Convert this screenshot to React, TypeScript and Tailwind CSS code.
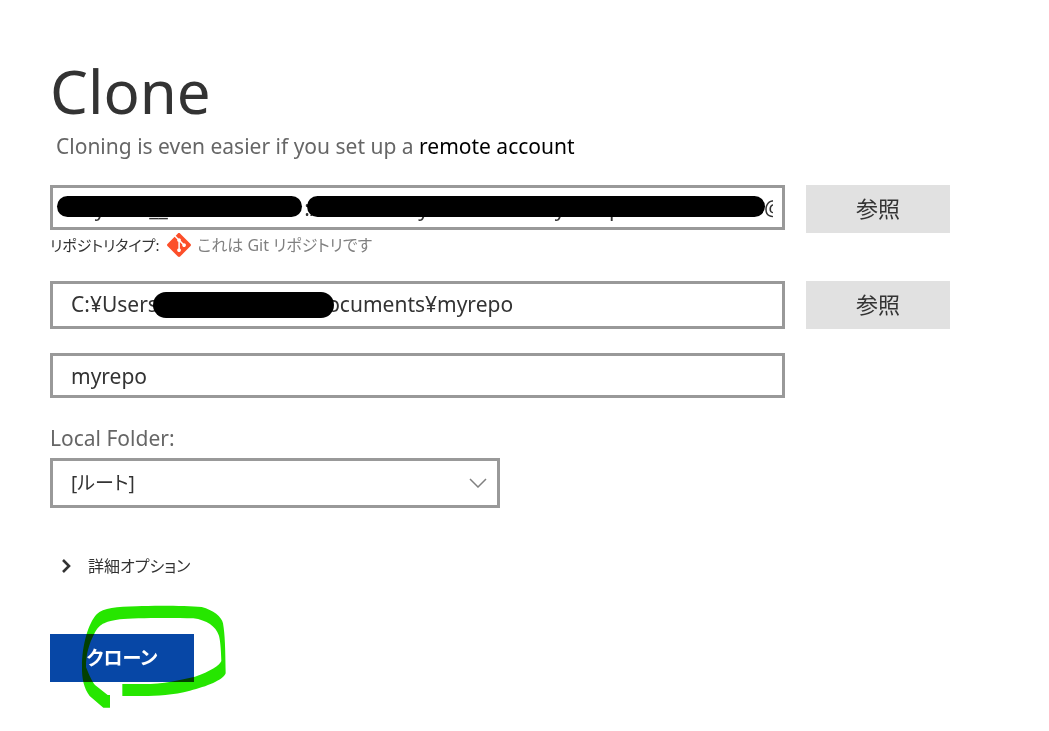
import { useState } from 'react';
import type { InputHTMLAttributes, ReactNode } from 'react';
import { SiGit } from 'react-icons/si';

// Non-breaking runs keep the hidden parts of the address as wide as the real ones
const gap = (n: number) => '\u00a0'.repeat(n);
const REMOTE_URL = `${gap(6)}y${gap(8)}__${gap(25)}://${gap(17)}y${gap(23)}y${gap(8)}p${gap(26)}@`;
const LOCAL_PATH = `C:¥Users${gap(31)}ocuments¥myrepo`;

function TextField({ className = '', ...rest }: InputHTMLAttributes<HTMLInputElement>) {
  return (
    <input
      type="text"
      className={`block w-full border-[3px] border-[#999999] bg-white text-[21px] text-[#333333] outline-none ${className}`}
      {...rest}
    />
  );
}

function BrowseButton({ label }: { label: string }) {
  return (
    <button type="button" aria-label={label} className="h-12 bg-[#e1e1e1] pb-0.5 text-[22px] text-[#333333]">
      参照
    </button>
  );
}

function Redaction({ className }: { className: string }) {
  return <span aria-hidden="true" className={`absolute rounded-full bg-black ${className}`} />;
}

function FormRow({ children, className = '' }: { children: ReactNode; className?: string }) {
  return (
    <div className={`grid grid-cols-[1fr_144px] items-start gap-x-[21px] ${className}`}>{children}</div>
  );
}

function MarkerCircle() {
  return (
    <svg
      aria-hidden="true"
      viewBox="0 0 600 360"
      className="pointer-events-none absolute -left-2.5 -top-[39px] h-[120px] w-[200px] max-w-none mix-blend-multiply"
    >
      <path
        fill="#26e600"
        d="M210 338 L190 338 L149 303 C132 280 125 250 126 215 C126 150 145 85 170 58 C190 38 230 36 290 34 C340 31 440 32 485 36 C520 45 545 65 549 85 C555 120 556 160 557 235 C550 255 500 275 450 287 C400 300 350 303 310 303 L247 303 L247 267 L310 267 C370 267 420 255 465 245 C510 230 540 210 544 198 C543 160 540 130 536 120 C528 95 500 75 460 70 C400 68 280 68 240 73 C190 80 178 90 165 112 C145 150 138 180 138 217 C150 245 155 258 165 270 L203 300 L210 300 Z"
      />
    </svg>
  );
}

export default function App() {
  const [url, setUrl] = useState(REMOTE_URL);
  const [path, setPath] = useState(LOCAL_PATH);
  const [name, setName] = useState('myrepo');

  return (
    <main
      lang="ja"
      className="min-h-screen bg-white pt-[51px] pr-[99px] pb-12 pl-[50px] font-['Noto_Sans','Noto_Sans_CJK_JP',sans-serif] text-[#333333] [font-feature-settings:'palt']"
    >
      <h1 className="text-[60px] leading-20">Clone</h1>
      <p className="mt-px pl-1.5 text-[21px] leading-7 text-[#666666]">
        Cloning is even easier if you set up a{' '}
        <a href="#accounts" className="text-black">
          remote account
        </a>
      </p>

      <form onSubmit={(e) => e.preventDefault()}>
        {/* Remote address */}
        <FormRow className="mt-[25px]">
          <div>
            <div className="relative">
              <TextField
                aria-label="Source Path / URL"
                className="h-[45px] px-[9px]"
                value={url}
                onChange={(e) => setUrl(e.target.value)}
              />
              <Redaction className="left-[7px] top-[11px] h-[21px] w-[245px]" />
              <Redaction className="left-[257px] top-[11px] h-[21px] w-[458px]" />
            </div>
            <div className="flex h-[30px] items-center text-base">
              <span className="text-[15px]">リポジトリタイプ:</span>
              <SiGit aria-hidden="true" className="mr-1.5 ml-2 h-6 w-6 text-[#fc4f2a]" />
              <span className="text-[#808080]">これは Git リポジトリです</span>
            </div>
          </div>
          <BrowseButton label="参照 (リモート)" />
        </FormRow>

        {/* Destination folder */}
        <FormRow className="mt-[21px]">
          <div className="relative">
            <TextField
              aria-label="Destination Path"
              className="h-12 px-[18px] pb-0.5"
              value={path}
              onChange={(e) => setPath(e.target.value)}
            />
            <Redaction className="left-[103px] top-[11px] h-[26px] w-[181px]" />
          </div>
          <BrowseButton label="参照 (保存先)" />
        </FormRow>

        {/* Bookmark name */}
        <FormRow className="mt-6">
          <TextField
            aria-label="Name"
            className="h-[45px] px-[18px]"
            value={name}
            onChange={(e) => setName(e.target.value)}
          />
        </FormRow>

        <label htmlFor="folder" className="mt-[26px] block text-[21px] leading-7 text-[#666666]">
          Local Folder:
        </label>
        <div className="relative mt-1.5 max-w-[450px]">
          <select
            id="folder"
            className="block h-[50px] w-full appearance-none border-[3px] border-[#999999] bg-white px-[18px] text-[19px] text-[#333333] outline-none"
          >
            <option>[ルート]</option>
          </select>
          <svg
            aria-hidden="true"
            viewBox="0 0 18 10"
            className="pointer-events-none absolute right-[13px] top-5 h-2.5 w-[18px]"
          >
            <path d="M1 1 L9 9 L17 1" fill="none" stroke="#808080" strokeWidth="1.5" />
          </svg>
        </div>

        <button type="button" aria-expanded="false" className="mt-[46px] flex h-6 items-center pl-3 text-base">
          <svg aria-hidden="true" viewBox="0 0 9 14" className="mr-[17px] h-3.5 w-[9px]">
            <path d="M1 1 L7 7 L1 13" fill="none" stroke="#333333" strokeWidth="2.6" />
          </svg>
          詳細オプション
        </button>

        <div className="relative mt-14 w-36">
          <button type="submit" className="block h-12 w-full bg-[#0747a6] text-[19px] font-bold text-white">
            クローン
          </button>
          <MarkerCircle />
        </div>
      </form>
    </main>
  );
}
